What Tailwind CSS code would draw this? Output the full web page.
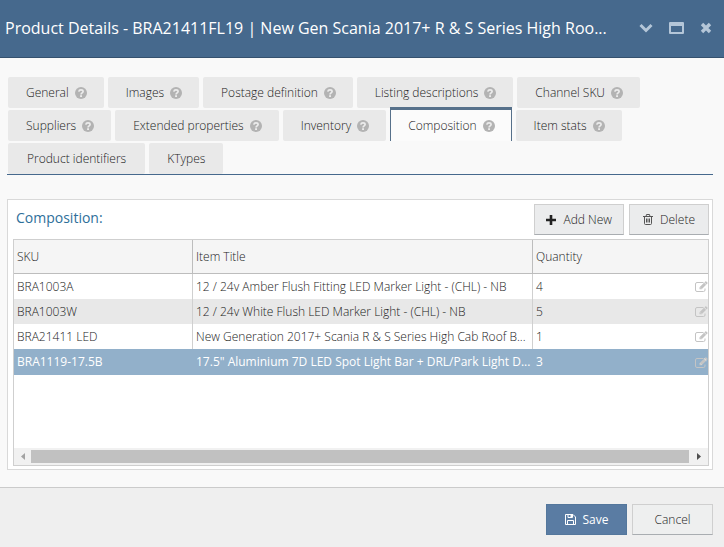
<!DOCTYPE html>
<html lang="en">
<head>
<meta charset="utf-8">
<meta name="viewport" content="width=device-width, initial-scale=1">
<title>Product Details</title>
<script src="https://cdn.jsdelivr.net/npm/@tailwindcss/browser@4"></script>
</head>
<body class="min-h-screen flex flex-col bg-[#f9f9f9] font-['Open_Sans','Noto_Sans',sans-serif] font-light text-xs text-[#222]">
<svg class="hidden" aria-hidden="true">
  <symbol id="help" viewBox="0 0 12 12"><path fill="currentColor" d="M6 0a6 6 0 1 0 0 12A6 6 0 0 0 6 0Z"/><path fill="none" stroke="#ececec" stroke-width="1.700" d="M3.800 4.600C4 3.400 4.800 2.900 6 2.900c1.300 0 2.100.7 2.100 1.600 0 1.400-2 1.300-2 2.900"/><path fill="#ececec" d="M5.100 8.200h1.900V10H5.100Z"/></symbol>
  <symbol id="edit" viewBox="0 0 13 11"><path fill="none" stroke="currentColor" d="M8.500 1.500H2Q.5 1.500.5 3v6Q.5 10.500 2 10.500h6.500Q10 10.500 10 9V7.500"/><path fill="currentColor" d="M4.500 6.200 10.300.4q.5-.5 1 0l1.100 1.100q.5.500 0 1L6.700 8.300H4.500Z"/><path stroke="#fff" stroke-width=".6" d="m9.200 1.500 2.200 2.200M5.300 6.600l.9.900"/></symbol>
</svg>

<header class="flex items-center h-[58px] shrink-0 pl-[5px] pr-3 pb-px bg-[#46698d] border-b border-[#35516e] text-white">
  <h1 class="flex-1 min-w-0 truncate text-base font-normal">Product Details - BRA21411FL19 | New Gen Scania 2017+ R &amp; S Series High Roo...</h1>
  <div class="flex items-center gap-4 text-[#b4c6d8]">
    <button type="button" aria-label="Collapse" class="block"><svg class="w-[14px] h-3" viewBox="0 0 14 12"><path fill="none" stroke="currentColor" stroke-width="3" d="m1.500 3 5.500 5.500L12.500 3"/></svg></button>
    <button type="button" aria-label="Maximize" class="block"><svg class="w-[15px] h-3" viewBox="0 0 15 12"><path fill="currentColor" fill-rule="evenodd" d="M1 0h13q1 0 1 1v10q0 1-1 1H1q-1 0-1-1V1q0-1 1-1Zm1 4v6h11V4Z"/></svg></button>
    <button type="button" aria-label="Close" class="block"><svg class="w-3 h-3" viewBox="0 0 12 12"><path fill="none" stroke="currentColor" stroke-width="3.400" d="m2 2 8 8M10 2l-8 8"/></svg></button>
  </div>
</header>

<main class="flex-1 flex flex-col pl-[7px] pr-[11px] pt-[19px] pb-[17px]">
  <div role="tablist" class="flex flex-wrap gap-x-1 gap-y-[2px] pl-px border-b border-[#46698d]">
    <button role="tab" type="button" class="flex items-center gap-[6px] h-[31px] pl-[18px] pr-[17px] rounded-xs bg-[#e9e9e9]">General<svg class="size-3 text-[#b3b3b3]"><use href="#help"/></svg></button>
    <button role="tab" type="button" class="flex items-center gap-[6px] h-[31px] pl-[18px] pr-[17px] rounded-xs bg-[#e9e9e9]">Images<svg class="size-3 text-[#b3b3b3]"><use href="#help"/></svg></button>
    <button role="tab" type="button" class="flex items-center gap-[6px] h-[31px] pl-[18px] pr-[17px] rounded-xs bg-[#e9e9e9]">Postage definition<svg class="size-3 text-[#b3b3b3]"><use href="#help"/></svg></button>
    <button role="tab" type="button" class="flex items-center gap-[6px] h-[31px] pl-[18px] pr-[17px] rounded-xs bg-[#e9e9e9]">Listing descriptions<svg class="size-3 text-[#b3b3b3]"><use href="#help"/></svg></button>
    <button role="tab" type="button" class="flex items-center gap-[6px] h-[31px] pl-[18px] pr-[17px] rounded-xs bg-[#e9e9e9]">Channel SKU<svg class="size-3 text-[#b3b3b3]"><use href="#help"/></svg></button>
    <button role="tab" type="button" class="flex items-center gap-[6px] h-[31px] pl-[18px] pr-[17px] rounded-xs bg-[#e9e9e9]">Suppliers<svg class="size-3 text-[#b3b3b3]"><use href="#help"/></svg></button>
    <button role="tab" type="button" class="flex items-center gap-[6px] h-[31px] pl-[18px] pr-[17px] rounded-xs bg-[#e9e9e9]">Extended properties<svg class="size-3 text-[#b3b3b3]"><use href="#help"/></svg></button>
    <button role="tab" type="button" class="flex items-center gap-[6px] h-[31px] pl-[18px] pr-[17px] rounded-xs bg-[#e9e9e9]">Inventory<svg class="size-3 text-[#b3b3b3]"><use href="#help"/></svg></button>
    <button role="tab" type="button" aria-selected="true" class="flex items-center gap-[6px] h-[34px] -mt-[3px] pl-[17px] pr-4 border-x border-t-3 border-[#56708a] bg-[#fbfbfb]">Composition<svg class="size-3 text-[#b3b3b3]"><use href="#help"/></svg></button>
    <button role="tab" type="button" class="flex items-center gap-[6px] h-[31px] pl-[18px] pr-[17px] rounded-xs bg-[#e9e9e9]">Item stats<svg class="size-3 text-[#b3b3b3]"><use href="#help"/></svg></button>
    <button role="tab" type="button" class="h-[31px] px-[19px] rounded-xs bg-[#e9e9e9]">Product identifiers</button>
    <button role="tab" type="button" class="h-[31px] px-[18px] rounded-xs bg-[#e9e9e9]">KTypes</button>
  </div>

  <section class="flex-1 flex flex-col mt-6 pt-1 pl-[5px] pr-[3px] pb-[3px] border border-[#d9d9d9] bg-white">
    <div class="flex items-center justify-between pl-[3px] mb-1">
      <h2 class="text-sm font-normal text-[#2e6f9a] pb-[3px]">Composition:</h2>
      <div class="flex gap-[5px]">
        <button type="button" class="flex items-center gap-[7px] h-[31px] px-[11px] border border-[#cfcfcf] border-b-[#a9adb1] bg-[#ebeced]"><svg class="w-[10px] h-[10px]" viewBox="0 0 10 10"><path stroke="currentColor" stroke-width="2.600" d="M5 0v10M0 5h10"/></svg>Add New</button>
        <button type="button" class="flex items-center gap-[7px] h-[31px] px-[13px] border border-[#cfcfcf] border-b-[#a9adb1] bg-[#ebeced]"><svg class="w-[10px] h-[11px] text-[#555]" viewBox="0 0 10 11"><path fill="none" stroke="currentColor" d="M0 2.500h10M3 2.500l.5-2h3l.5 2M1.500 2.500v7q0 1 1 1h5q1 0 1-1v-7M3.500 4.500v4M5 4.500v4M6.500 4.500v4"/></svg>Delete</button>
      </div>
    </div>
    <div class="flex-1 flex flex-col border border-[#cfcfcf]">
      <table class="w-full table-fixed border-separate border-spacing-0 text-left">
        <colgroup><col class="w-[179px]"><col class="w-[340px]"><col></colgroup>
        <thead class="bg-[#f5f5f5]">
          <tr class="h-[34px]">
            <th class="px-[3px] font-light border-b border-r border-[#bdbdbd]">SKU</th>
            <th class="px-[3px] font-light border-b border-r border-[#bdbdbd]">Item Title</th>
            <th class="px-[3px] font-light border-b border-[#bdbdbd]">Quantity</th>
          </tr>
        </thead>
        <tbody>
          <tr class="h-[25px]">
            <td class="px-[3px] truncate border-r border-[#d0d0d0]">BRA1003A</td>
            <td class="px-[3px] whitespace-nowrap border-r border-[#d0d0d0]">12 / 24v Amber Flush Fitting LED Marker Light - (CHL) - NB</td>
            <td class="pl-[3px]"><div class="flex items-center justify-between">4<button type="button" aria-label="Edit" class="text-[#c4c4c4]"><svg class="w-[13px] h-[11px]"><use href="#edit"/></svg></button></div></td>
          </tr>
          <tr class="h-[25px] bg-[#e8e8e8]">
            <td class="px-[3px] truncate border-r border-[#d0d0d0]">BRA1003W</td>
            <td class="px-[3px] whitespace-nowrap border-r border-[#d0d0d0]">12 / 24v White Flush LED Marker Light - (CHL) - NB</td>
            <td class="pl-[3px]"><div class="flex items-center justify-between">5<button type="button" aria-label="Edit" class="text-[#c4c4c4]"><svg class="w-[13px] h-[11px]"><use href="#edit"/></svg></button></div></td>
          </tr>
          <tr class="h-[25px]">
            <td class="px-[3px] truncate border-r border-[#d0d0d0]">BRA21411 LED</td>
            <td class="px-[3px] whitespace-nowrap border-r border-[#d0d0d0]">New Generation 2017+ Scania R &amp; S Series High Cab Roof B...</td>
            <td class="pl-[3px]"><div class="flex items-center justify-between">1<button type="button" aria-label="Edit" class="text-[#c4c4c4]"><svg class="w-[13px] h-[11px]"><use href="#edit"/></svg></button></div></td>
          </tr>
          <tr class="h-[26px] bg-[#92b0ca] text-white font-normal">
            <td class="px-[3px] truncate border-r border-[#92b0ca]">BRA1119-17.5B</td>
            <td class="px-[3px] whitespace-nowrap border-r border-[#92b0ca]">17.5" Aluminium 7D LED Spot Light Bar + DRL/Park Light D...</td>
            <td class="pl-[3px]"><div class="flex items-center justify-between">3<button type="button" aria-label="Edit" class="text-[#c4c4c4]"><svg class="w-[13px] h-[11px]"><use href="#edit"/></svg></button></div></td>
          </tr>
        </tbody>
      </table>
      <div class="mt-auto flex items-center h-[17px] bg-[#f1f1f1]">
        <button type="button" aria-label="Scroll left" class="w-[17px] h-full grid place-items-center text-[#a3a3a3]"><svg class="w-1 h-[7px]" viewBox="0 0 4 7"><path fill="currentColor" d="M4 0v7L0 3.500Z"/></svg></button>
        <div class="flex-1 h-[13px] bg-[#c1c1c1]"></div>
        <button type="button" aria-label="Scroll right" class="w-[19px] h-full grid place-items-center text-[#505050]"><svg class="w-1 h-[7px]" viewBox="0 0 4 7"><path fill="currentColor" d="M0 0v7l4-3.500Z"/></svg></button>
      </div>
    </div>
  </section>
</main>

<footer class="flex justify-end gap-[5px] shrink-0 pt-4 pb-3 pr-[11px] border-t border-[#cbcbcb] bg-[#efefef]">
  <button type="button" class="flex items-center justify-center gap-[7px] h-[31px] w-[81px] border border-[#54779c] bg-[#5a7ca3] text-white font-normal"><svg class="w-[11px] h-[11px]" viewBox="0 0 11 11"><path fill="none" stroke="currentColor" d="M.5.5H8L10.500 3v7.500H.5ZM2.500 10.500v-4h6v4M3 .5v3h4.500v-3"/><path fill="currentColor" d="M5.500 1h1.500v2H5.500Z"/></svg>Save</button>
  <button type="button" class="h-[31px] w-[81px] border border-[#cfcfcf] border-b-[#a9adb1] bg-[#eeefef]">Cancel</button>
</footer>
</body>
</html>
